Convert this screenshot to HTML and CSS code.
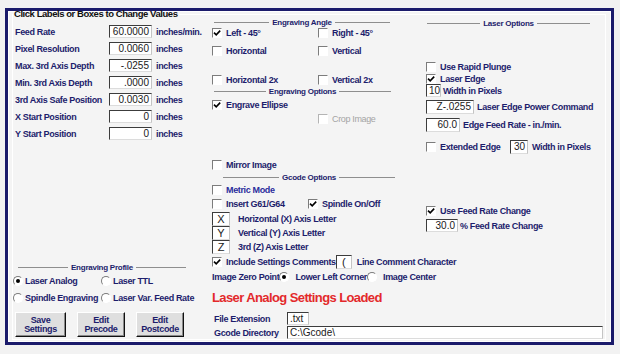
FILE: index.html
```html
<!DOCTYPE html>
<html lang="en">
<head>
    <meta charset="UTF-8">
    <meta name="viewport" content="width=device-width, initial-scale=1.0">
    <title>Engraving Settings</title>
    <link rel="stylesheet" href="styles.css">
</head>
<body>
<div class="window">
    <div class="group">
        <div class="col-left">
            <div class="group-title">Click Labels or Boxes to Change Values</div>
            <div class="values">
                <div class="value-row"><span class="value-label">Feed Rate</span><span class="field num">60.0000</span><span class="unit">inches/min.</span></div>
                <div class="value-row"><span class="value-label">Pixel Resolution</span><span class="field num">0.0060</span><span class="unit">inches</span></div>
                <div class="value-row"><span class="value-label">Max. 3rd Axis Depth</span><span class="field num">-.0255</span><span class="unit">inches</span></div>
                <div class="value-row"><span class="value-label">Min. 3rd Axis Depth</span><span class="field num">.0000</span><span class="unit">inches</span></div>
                <div class="value-row"><span class="value-label">3rd Axis Safe Position</span><span class="field num">0.0030</span><span class="unit">inches</span></div>
                <div class="value-row"><span class="value-label">X Start Position</span><span class="field num">0</span><span class="unit">inches</span></div>
                <div class="value-row"><span class="value-label">Y Start Position</span><span class="field num">0</span><span class="unit">inches</span></div>
            </div>

            <div class="profile">
                <div class="sep sep-profile"><span>Engraving Profile</span></div>
                <div class="radio-row">
                    <span class="opt radio opt-profile"><span class="rb on"></span>Laser Analog</span>
                    <span class="opt radio"><span class="rb"></span>Laser TTL</span>
                </div>
                <div class="radio-row">
                    <span class="opt radio opt-profile"><span class="rb"></span>Spindle Engraving</span>
                    <span class="opt radio"><span class="rb"></span>Laser Var. Feed Rate</span>
                </div>
                <div class="buttons">
                    <button class="btn btn-save">Save<br>Settings</button>
                    <button class="btn">Edit<br>Precode</button>
                    <button class="btn">Edit<br>Postcode</button>
                </div>
            </div>
        </div>

        <div class="col-rest">
            <div class="upper">
                <div class="col-mid">
                    <div class="sep sep-angle"><span>Engraving Angle</span></div>
                    <div class="row pair row-first">
                        <span class="opt opt-half"><span class="cb on"><svg viewBox="0 0 8 8"><path d="M1 3.6l2.2 2.2L7.2 1.6"/></svg></span>Left - 45°</span>
                        <span class="opt"><span class="cb"></span>Right - 45°</span>
                    </div>
                    <div class="row pair row-second">
                        <span class="opt opt-half"><span class="cb"></span>Horizontal</span>
                        <span class="opt"><span class="cb"></span>Vertical</span>
                    </div>
                    <div class="row pair row-third">
                        <span class="opt opt-half"><span class="cb"></span>Horizontal 2x</span>
                        <span class="opt"><span class="cb"></span>Vertical 2x</span>
                    </div>
                    <div class="sep sep-options"><span>Engraving Options</span></div>
                    <div class="row row-ellipse">
                        <span class="opt"><span class="cb on"><svg viewBox="0 0 8 8"><path d="M1 3.6l2.2 2.2L7.2 1.6"/></svg></span>Engrave Ellipse</span>
                    </div>
                    <div class="row row-crop">
                        <span class="opt disabled"><span class="cb"></span>Crop Image</span>
                    </div>
                    <div class="row row-mirror">
                        <span class="opt"><span class="cb"></span>Mirror Image</span>
                    </div>
                    <div class="sep sep-gcode"><span>Gcode Options</span></div>
                    <div class="row row-metric">
                        <span class="opt metric"><span class="cb"></span>Metric Mode</span>
                    </div>
                    <div class="row pair">
                        <span class="opt opt-insert"><span class="cb"></span>Insert G61/G64</span>
                        <span class="opt"><span class="cb on"><svg viewBox="0 0 8 8"><path d="M1 3.6l2.2 2.2L7.2 1.6"/></svg></span>Spindle On/Off</span>
                    </div>
                    <div class="row letter-row letter-first"><span class="field letter">X</span>Horizontal (X) Axis Letter</div>
                    <div class="row letter-row"><span class="field letter">Y</span>Vertical (Y) Axis Letter</div>
                    <div class="row letter-row"><span class="field letter">Z</span>3rd (Z) Axis Letter</div>
                    <div class="row row-comments">
                        <span class="opt opt-comments"><span class="cb on"><svg viewBox="0 0 8 8"><path d="M1 3.6l2.2 2.2L7.2 1.6"/></svg></span>Include Settings Comments</span>
                        <span class="field letter paren">(</span>
                        <span>Line Comment Character</span>
                    </div>
                    <div class="row row-zero">
                        <span class="zero-label">Image Zero Point</span>
                        <span class="opt zero-opt"><span class="rb on"></span>Lower Left Corner</span>
                        <span class="opt zero-opt"><span class="rb"></span>Image Center</span>
                    </div>
                </div>

                <div class="col-right">
                    <div class="sep sep-laser"><span>Laser Options</span></div>
                    <div class="row r13 row-rapid">
                        <span class="opt"><span class="cb"></span>Use Rapid Plunge</span>
                    </div>
                    <div class="row r11">
                        <span class="opt"><span class="cb on"><svg viewBox="0 0 8 8"><path d="M1 3.6l2.2 2.2L7.2 1.6"/></svg></span>Laser Edge</span>
                    </div>
                    <div class="row r13 box-row"><span class="field w-10">10</span>Width in Pixels</div>
                    <div class="row r14 box-row gap3"><span class="field num w-power">Z-.0255</span>Laser Edge Power Command</div>
                    <div class="row r14 box-row gap4"><span class="field num w-edge">60.0</span>Edge Feed Rate - in./min.</div>
                    <div class="row r14 row-extended">
                        <span class="opt opt-extended"><span class="cb"></span>Extended Edge</span>
                        <span class="field num w-30">30</span>
                        <span>Width in Pixels</span>
                    </div>
                    <div class="row r13 row-feed">
                        <span class="opt"><span class="cb on"><svg viewBox="0 0 8 8"><path d="M1 3.6l2.2 2.2L7.2 1.6"/></svg></span>Use Feed Rate Change</span>
                    </div>
                    <div class="row r13 box-row gap2"><span class="field num w-pct">30.0</span>% Feed Rate Change</div>
                </div>
            </div>

            <div class="status">Laser Analog Settings Loaded</div>
            <div class="file-row file-first"><span class="file-label">File Extension</span><span class="field text w-ext">.txt</span></div>
            <div class="file-row"><span class="file-label">Gcode Directory</span><span class="field text w-dir">C:\Gcode\</span></div>
        </div>
    </div>
</div>
</body>
</html>
```

FILE: styles.css
```css
body {
    margin: 0;
    background: #f2f2f2;
    font-family: "Liberation Sans", Arial, sans-serif;
    font-size: 9px;
    font-weight: bold;
    letter-spacing: -0.35px;
    color: #1d1d6c;
}
.window {
    width: 609px;
    height: 337px;
    margin: 8px 0 0 5px;
    box-sizing: border-box;
    border: 3px solid #1b1b6b;
    background: #f4f4f4;
    box-shadow: inset 1px 1px 0 #fff, inset -1px -1px 0 #fff;
}
.group {
    display: flex;
    width: 594px;
    height: 326px;
    margin: 3px 0 0 4px;
    box-sizing: border-box;
    border: 1px solid #fff;
}

/* left column */
.col-left {
    display: flex;
    flex-direction: column;
    width: 196px;
    flex-shrink: 0;
}
.group-title {
    align-self: flex-start;
    height: 10px;
    margin-top: -6px;
    padding: 0 2px 0 1px;
    line-height: 10px;
    font-size: 9.5px;
    letter-spacing: -0.45px;
    color: #111;
    white-space: nowrap;
    background: linear-gradient(transparent 3px, #f4f4f4 3px);
}
.values {
    margin-top: 4px;
}
.value-row {
    display: flex;
    align-items: center;
    height: 17px;
    padding-left: 2px;
}
.value-label {
    width: 94px;
    white-space: nowrap;
}
.value-row .field {
    width: 43px;
}
.unit {
    margin-left: 4px;
    white-space: nowrap;
}

.field {
    display: inline-block;
    box-sizing: border-box;
    height: 13px;
    padding: 0 2px;
    background: #fff;
    border-top: 1px solid #3c3c3c;
    border-left: 1px solid #3c3c3c;
    border-right: 1px solid #c4c4c4;
    border-bottom: 1px solid #dcdcdc;
    font-weight: normal;
    font-size: 10px;
    letter-spacing: 0;
    line-height: 11px;
    color: #1a1a1a;
    white-space: nowrap;
    flex-shrink: 0;
}
.num {
    text-align: right;
}

.profile {
    margin-top: auto;
    padding-bottom: 2px;
}
.radio-row {
    display: flex;
    align-items: center;
    height: 17px;
}
.opt-profile {
    width: 88px;
}
.buttons {
    display: flex;
    gap: 11px;
    margin-top: 6px;
    padding-left: 2px;
}
.btn {
    width: 48px;
    height: 25px;
    padding: 0;
    background: #dfdfdf;
    border: 1px solid;
    border-color: #fff #111 #111 #fff;
    box-shadow: inset -1px -1px 0 #8a8a8a;
    font-family: "Liberation Sans", Arial, sans-serif;
    font-weight: bold;
    font-size: 9px;
    letter-spacing: -0.35px;
    line-height: 9px;
    color: #1d1d6c;
}
.btn-save {
    width: 51px;
}

/* separators with centered caption */
.sep {
    display: flex;
    align-items: center;
    gap: 3px;
    height: 8px;
    font-size: 8px;
    letter-spacing: -0.25px;
    white-space: nowrap;
}
.sep::before,
.sep::after {
    content: '';
    flex: 1;
    border-top: 1px solid #8e8e8e;
}
.sep-profile {
    width: 168px;
    height: 10px;
    margin-left: 5px;
}
.sep-angle {
    width: 176px;
    margin: 3px 0 0 2px;
}
.sep-options {
    width: 177px;
    margin-left: 2px;
}
.sep-gcode {
    width: 172px;
    margin: 1px 0 0 11px;
}
.sep-laser {
    width: 163px;
    margin: 4px 0 0 1px;
}

/* checkbox / radio */
.opt {
    display: flex;
    align-items: center;
    gap: 4px;
    white-space: nowrap;
}
.opt.radio {
    gap: 2px;
}
.cb {
    display: flex;
    align-items: center;
    justify-content: center;
    width: 10px;
    height: 10px;
    box-sizing: border-box;
    border: 1px solid;
    border-color: #7c7c7c #fff #fff #7c7c7c;
    background: #fff;
    flex-shrink: 0;
}
.cb svg {
    width: 8px;
    height: 8px;
    fill: none;
    stroke: #000;
    stroke-width: 1.6;
}
.rb {
    display: flex;
    align-items: center;
    justify-content: center;
    width: 10px;
    height: 10px;
    box-sizing: border-box;
    border-radius: 50%;
    border: 1px solid;
    border-color: #7c7c7c #fff #fff #7c7c7c;
    background: #fff;
    flex-shrink: 0;
}
.rb.on::after {
    content: '';
    width: 4px;
    height: 4px;
    border-radius: 50%;
    background: #000;
}
.disabled {
    color: #a4a4a4;
    font-weight: normal;
}
.disabled .cb {
    border-color: #b4b4b4 #fff #fff #b4b4b4;
}
.metric {
    color: #2a2c9c;
}

/* right area */
.col-rest {
    display: flex;
    flex-direction: column;
    flex: 1;
}
.upper {
    display: flex;
}
.col-mid {
    display: flex;
    flex-direction: column;
    width: 214px;
    flex-shrink: 0;
    padding-left: 3px;
    box-sizing: border-box;
}
.row {
    display: flex;
    align-items: center;
    height: 14px;
    white-space: nowrap;
}
.opt-half {
    width: 106px;
}
.row-second {
    margin-top: 4px;
}
.row-third {
    margin-top: 15px;
}
.row-ellipse {
    margin-top: 3px;
}
.row-crop {
    padding-left: 106px;
}
.row-mirror {
    margin-top: 32px;
}
.row-metric {
    margin-top: 2px;
}
.opt-insert {
    width: 96px;
}
.letter-row {
    gap: 8px;
}
.letter-first {
    margin-top: 1px;
}
.field.letter {
    width: 18px;
    height: 14px;
    padding: 0;
    text-align: center;
    font-size: 11px;
    line-height: 12px;
}
.row-comments {
    margin-top: 1px;
}
.opt-comments {
    width: 132px;
}
.field.paren {
    width: 16px;
    margin-right: 5px;
}
.row-zero {
    margin-top: 1px;
}
.zero-label {
    width: 73px;
}
.zero-opt {
    gap: 6px;
    width: 100px;
}

.col-right {
    display: flex;
    flex-direction: column;
    flex: 1;
    padding-left: 3px;
}
.r13 {
    height: 13px;
}
.r11 {
    height: 11px;
}
.r14 {
    height: 14px;
}
.row-rapid {
    margin-top: 33px;
}
.box-row {
    gap: 2px;
}
.box-row .field {
    height: 100%;
}
.gap3 {
    gap: 3px;
    margin-top: 3px;
}
.gap4 {
    gap: 3px;
    margin-top: 4px;
}
.gap2 {
    gap: 2px;
    margin-top: 2px;
}
.w-10 {
    width: 15px;
}
.w-power {
    width: 48px;
}
.w-edge {
    width: 34px;
}
.w-pct {
    width: 32px;
}
.row-extended {
    margin-top: 8px;
}
.opt-extended {
    width: 84px;
}
.field.w-30 {
    width: 18px;
    height: 14px;
    margin-right: 4px;
}
.row-feed {
    margin-top: 50px;
}

.status {
    margin-top: 5px;
    padding-left: 3px;
    font-size: 13px;
    letter-spacing: -0.6px;
    line-height: 18px;
    color: #e3292b;
}
.file-row {
    display: flex;
    align-items: center;
    height: 13px;
    margin-top: 1px;
    padding-left: 5px;
    padding-right: 2px;
}
.file-first {
    margin-top: 5px;
}
.file-label {
    width: 73px;
    flex-shrink: 0;
}
.w-ext {
    width: 22px;
}
.w-dir {
    flex: 1;
}
```
